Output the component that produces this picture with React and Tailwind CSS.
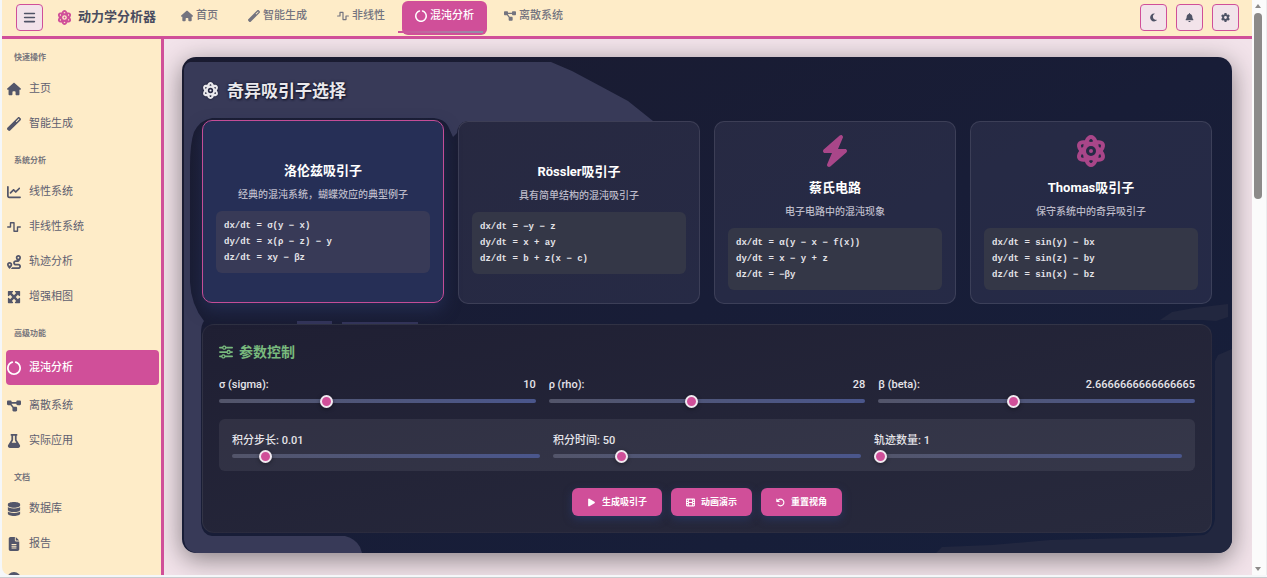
import { useState } from 'react';
import {
  FaArrowRotateLeft,
  FaAtom,
  FaBars,
  FaBell,
  FaBolt,
  FaChartLine,
  FaCircleNotch,
  FaCircleQuestion,
  FaDatabase,
  FaDiagramProject,
  FaFileLines,
  FaFilm,
  FaFlask,
  FaGear,
  FaHouse,
  FaMaximize,
  FaMoon,
  FaPlay,
  FaRoute,
  FaSliders,
  FaWandMagic,
  FaWaveSquare,
} from 'react-icons/fa6';

const navItems = [
  { id: 'home', label: '首页', icon: FaHouse },
  { id: 'smart', label: '智能生成', icon: FaWandMagic },
  { id: 'nonlinear', label: '非线性', icon: FaWaveSquare },
  { id: 'chaos', label: '混沌分析', icon: FaCircleNotch },
  { id: 'discrete', label: '离散系统', icon: FaDiagramProject },
];

const sidebarSections = [
  {
    title: '快速操作',
    items: [
      { id: 'home', label: '主页', icon: FaHouse },
      { id: 'smart', label: '智能生成', icon: FaWandMagic },
    ],
  },
  {
    title: '系统分析',
    items: [
      { id: 'linear', label: '线性系统', icon: FaChartLine },
      { id: 'nonlinear', label: '非线性系统', icon: FaWaveSquare },
      { id: 'trajectory', label: '轨迹分析', icon: FaRoute },
      { id: 'phase', label: '增强相图', icon: FaMaximize },
    ],
  },
  {
    title: '高级功能',
    items: [
      { id: 'chaos', label: '混沌分析', icon: FaCircleNotch },
      { id: 'discrete', label: '离散系统', icon: FaDiagramProject },
      { id: 'apps', label: '实际应用', icon: FaFlask },
    ],
  },
  {
    title: '文档',
    items: [
      { id: 'database', label: '数据库', icon: FaDatabase },
      { id: 'report', label: '报告', icon: FaFileLines },
      { id: 'help', icon: FaCircleQuestion },
    ],
  },
];

const attractors = [
  {
    id: 'lorenz',
    name: '洛伦兹吸引子',
    desc: '经典的混沌系统，蝴蝶效应的典型例子',
    equations: ['dx/dt = σ(y − x)', 'dy/dt = x(ρ − z) − y', 'dz/dt = xy − βz'],
  },
  {
    id: 'rossler',
    name: 'Rössler吸引子',
    desc: '具有简单结构的混沌吸引子',
    equations: ['dx/dt = −y − z', 'dy/dt = x + ay', 'dz/dt = b + z(x − c)'],
  },
  {
    id: 'chua',
    name: '蔡氏电路',
    desc: '电子电路中的混沌现象',
    icon: FaBolt,
    equations: ['dx/dt = α(y − x − f(x))', 'dy/dt = x − y + z', 'dz/dt = −βy'],
  },
  {
    id: 'thomas',
    name: 'Thomas吸引子',
    desc: '保守系统中的奇异吸引子',
    icon: FaAtom,
    equations: ['dx/dt = sin(y) − bx', 'dy/dt = sin(z) − by', 'dz/dt = sin(x) − bz'],
  },
];

const systemParams = [
  { id: 'sigma', label: 'σ (sigma):', min: 0, max: 30, step: 0.1 },
  { id: 'rho', label: 'ρ (rho):', min: 10, max: 50, step: 0.1 },
  { id: 'beta', label: 'β (beta):', min: 1, max: 5, step: 0.1 },
];

const runParams = [
  { id: 'dt', label: '积分步长', min: 0.001, max: 0.1, step: 0.001 },
  { id: 'time', label: '积分时间', min: 10, max: 200, step: 10 },
  { id: 'count', label: '轨迹数量', min: 1, max: 10, step: 1 },
];

const actions = [
  { label: '生成吸引子', icon: FaPlay },
  { label: '动画演示', icon: FaFilm },
  { label: '重置视角', icon: FaArrowRotateLeft },
];

const Slider = ({ param, value, onChange }) => (
  <input
    id={param.id}
    type="range"
    min={param.min}
    max={param.max}
    step={param.step}
    value={value}
    onChange={(e) => onChange(param.id, Number(e.target.value))}
    className="block h-1 w-full cursor-pointer appearance-none rounded-sm bg-linear-to-r from-[#53556a] to-[#4a568c] [&::-webkit-slider-thumb]:size-[13px] [&::-webkit-slider-thumb]:appearance-none [&::-webkit-slider-thumb]:rounded-full [&::-webkit-slider-thumb]:border-2 [&::-webkit-slider-thumb]:border-[#f1e9f0] [&::-webkit-slider-thumb]:bg-[#d04f99] [&::-webkit-slider-thumb]:shadow-[0_1px_4px_rgba(0,0,0,0.4)]"
  />
);

const IconButton = ({ label, children }) => (
  <button
    aria-label={label}
    className="flex size-[27px] items-center justify-center rounded border border-[#d04f99] bg-[#f2e3ea] text-[#4f5366]"
  >
    {children}
  </button>
);

const Header = ({ page, setPage }) => (
  <header className="flex h-[39px] shrink-0 items-center border-b-3 border-[#d04f99] bg-[#feecc8] pb-0.5 pl-3.5 pr-[13px]">
    <IconButton label="菜单">
      <FaBars size={13} />
    </IconButton>
    <div className="ml-3.5 flex items-center gap-1.5">
      <FaAtom size={15} className="text-[#d04f99]" />
      <h1 className="text-[13px] leading-5 font-bold text-[#4a4c60]">动力学分析器</h1>
    </div>
    <nav className="ml-3 flex items-center gap-1 pt-0.5">
      {navItems.map(({ id, label, icon: Icon }) => (
        <a
          key={id}
          href={`#${id}`}
          onClick={() => setPage(id)}
          className={`relative flex h-[34px] items-center gap-[3px] rounded-md px-[13px] pb-1 text-[11px] font-medium ${
            page === id ? 'bg-[#d04f99] text-white' : 'text-[#74747f]'
          }`}
        >
          <Icon size={12} />
          <span className="pt-px">{label}</span>
          {page === id && (
            <span className="absolute -left-1 right-1 bottom-0.5 h-0.5 bg-linear-to-r from-[#d04f99] to-[#8f90a8]" />
          )}
        </a>
      ))}
    </nav>
    <div className="ml-auto flex gap-[9px]">
      <IconButton label="深色模式">
        <FaMoon size={9} />
      </IconButton>
      <IconButton label="通知">
        <FaBell size={9} />
      </IconButton>
      <IconButton label="设置">
        <FaGear size={9} />
      </IconButton>
    </div>
  </header>
);

const Sidebar = ({ page, setPage }) => (
  <aside className="w-[162px] shrink-0 overflow-hidden rounded-bl-lg border-r-3 border-[#d04f99] bg-[#feecc8] pl-1 pr-0.5">
    {sidebarSections.map((section) => (
      <section key={section.title} className="mb-px">
        <h2 className="pt-3 pb-[7px] pl-2 text-[8px] leading-[13px] font-bold text-[#77757c]">{section.title}</h2>
        {section.items.map(({ id, label, icon: Icon }) => (
          <a
            key={id}
            href={`#${id}`}
            onClick={() => setPage(id)}
            className={`flex h-[35px] items-center gap-2 rounded text-[11px] ${
              page === id ? 'my-[3px] bg-[#d04f99] font-medium text-white' : 'text-[#5f6070]'
            }`}
          >
            <span className={`flex w-[15px] justify-center ${page === id ? 'text-white' : 'text-[#53566a]'}`}>
              <Icon size={14} />
            </span>
            {label && <span className="pt-0.5">{label}</span>}
          </a>
        ))}
      </section>
    ))}
  </aside>
);

const AttractorCard = ({ item, active, onSelect }) => {
  const Icon = item.icon;
  return (
    <button
      onClick={() => onSelect(item.id)}
      className={`flex min-h-[183px] flex-col justify-center rounded-[10px] border p-[13px] text-center ${
        active
          ? '-translate-y-px border-[#c44d97] bg-[#262f56] shadow-[0_7px_16px_rgba(38,47,86,0.8)]'
          : 'border-white/10 bg-[#a8a0c8]/10'
      }`}
    >
      <span className="mb-3 flex justify-center text-[#a94689]">{Icon && <Icon size={32} />}</span>
      <span className="text-[13px] leading-[18px] font-bold text-white">{item.name}</span>
      <span className="mt-2 text-[10px] leading-[14px] font-medium text-[#bcbac8]">{item.desc}</span>
      <span
        className={`mt-[9px] rounded-md px-2 py-[7px] text-left font-['Liberation_Mono',monospace] text-[9px] leading-4 font-bold text-[#e4e3e8] ${
          active ? 'bg-[#383a57]' : 'bg-[#343747]'
        }`}
      >
        {item.equations.map((eq) => (
          <span key={eq} className="block">
            {eq}
          </span>
        ))}
      </span>
    </button>
  );
};

// Lighter patches behind the panel content
const PanelGlow = () => (
  <>
    <svg className="pointer-events-none absolute top-0 left-0" width="480" height="496" aria-hidden="true">
      <path
        fill="#383a58"
        d="M2 12Q3 6 8 5H369L390 14L420 30L446 44L471 64H284Q276 66 275 76L271 80L266 69Q262 62 252 61H30Q18 63 12 75Q8 86 8 110V225Q9 248 22 264Q19 268 19 276V466Q20 478 30 479H163Q174 482 178 490L180 496H14Q3 494 2 483Z"
      />
      <path fill="#33355a" d="M115 264H150V267H115ZM160 265H236V267H160Z" />
    </svg>
    <svg className="pointer-events-none absolute right-0 bottom-0" width="300" height="250" aria-hidden="true">
      <path
        fill="#22273f"
        d="M300 60V250H4L10 244L60 242L118 237L240 234L272 232Q281 228 283 216V58L286 52L300 46ZM228 17L240 9L262 5L296 1V14L284 18L270 17Z"
      />
    </svg>
  </>
);

const ChaosPanel = () => {
  const [selected, setSelected] = useState('lorenz');
  const [values, setValues] = useState({ sigma: 10, rho: 28, beta: 8 / 3, dt: 0.01, time: 50, count: 1 });

  const handleChange = (id, value) => {
    setValues({ ...values, [id]: value });
  };

  return (
    <section className="relative overflow-hidden rounded-[14px] bg-linear-to-br from-[#1a1b30] via-[#181d37] to-[#161f3b] p-5">
      <PanelGlow />
      <div className="relative">
        <h2 className="flex items-center gap-2 text-[17px] leading-[26px] font-bold text-[#e9e8ec] [text-shadow:1px_1px_2px_#14162b,0_0_3px_#14162b]">
          <FaAtom size={17} className="drop-shadow-[0_0_1px_#14162b]" />
          <span className="pt-px">奇异吸引子选择</span>
        </h2>

        <div className="mt-[17px] grid grid-cols-4 gap-3.5">
          {attractors.map((item) => (
            <AttractorCard key={item.id} item={item} active={selected === item.id} onSelect={setSelected} />
          ))}
        </div>

        {/* Parameters */}
        <div className="mt-5 rounded-xl border border-white/5 bg-linear-to-br from-[#1f1f33] to-[#282a3d] p-4">
          <h3 className="flex items-center gap-1.5 text-[14px] leading-[22px] font-bold text-[#78b97d]">
            <FaSliders size={14} />
            参数控制
          </h3>
          <div className="mt-[13px] grid grid-cols-3 gap-[13px]">
            {systemParams.map((param) => (
              <div key={param.id}>
                <div className="mb-[5px] flex justify-between text-[11px] leading-[18px] font-medium text-[#e6e5ea]">
                  <label htmlFor={param.id}>{param.label}</label>
                  <span>{values[param.id]}</span>
                </div>
                <Slider param={param} value={values[param.id]} onChange={handleChange} />
              </div>
            ))}
          </div>

          <div className="mt-4 grid grid-cols-3 gap-[13px] rounded-md bg-white/7 px-[13px] pt-3.5 pb-[13px]">
            {runParams.map((param) => (
              <div key={param.id}>
                <label htmlFor={param.id} className="mb-[5px] block text-[11px] leading-4 font-medium text-[#e6e5ea]">
                  {param.label}: {values[param.id]}
                </label>
                <Slider param={param} value={values[param.id]} onChange={handleChange} />
              </div>
            ))}
          </div>

          <div className="mt-[17px] flex justify-center gap-[9px]">
            {actions.map(({ label, icon: Icon }) => (
              <button
                key={label}
                className="flex h-7 items-center gap-1.5 rounded-md bg-[#d04f99] px-[15px] text-[9px] font-bold text-white shadow-[0_3px_9px_rgba(42,58,110,0.7)]"
              >
                <Icon size={9} />
                <span className="pt-0.5">{label}</span>
              </button>
            ))}
          </div>
        </div>
      </div>
    </section>
  );
};

const ScrollRail = () => (
  <div className="flex w-[15px] shrink-0 flex-col items-center border-r border-[#ececee] bg-[#fbfbfb] pt-1 pr-0.5 pb-1" aria-hidden="true">
    <span className="border-x-3 border-b-4 border-x-transparent border-b-[#8c8a89]" />
    <span className="mt-[5px] h-[186px] w-2 rounded bg-[#8c8a89]" />
    <span className="mt-auto border-x-3 border-t-4 border-x-transparent border-t-[#8c8a89]" />
  </div>
);

const App = () => {
  const [page, setPage] = useState('chaos');

  return (
    <div className="flex h-screen flex-col overflow-hidden border-b border-[#c9cbce] bg-[#f5f7f9] pb-0.5 pl-0.5 font-[Roboto,'Noto_Sans_CJK_SC',sans-serif]">
      <div className="flex min-h-0 flex-1">
        <div className="flex min-w-0 flex-1 flex-col">
          <Header page={page} setPage={setPage} />
          <div className="flex min-h-0 flex-1">
            <Sidebar page={page} setPage={setPage} />
            <main className="min-w-0 flex-1 overflow-hidden bg-[#f2e3ea] pt-[18px] pr-5 pl-[18px]">
              <div className="rounded-[14px] shadow-[0_6px_26px_rgba(0,0,0,0.45)]">
                <ChaosPanel />
              </div>
            </main>
          </div>
        </div>
        <ScrollRail />
      </div>
    </div>
  );
};

export default App;
